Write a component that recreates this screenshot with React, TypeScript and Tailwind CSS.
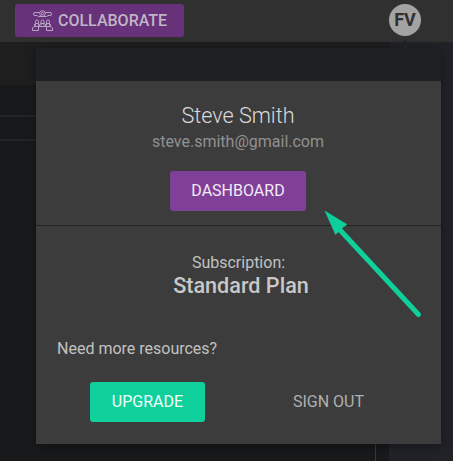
import React from 'react';

function TeamIcon() {
  return (
    <svg width="21" height="21" viewBox="0 0 21 21" fill="none" stroke="#b9a5c3" strokeWidth="1" className="shrink-0">
      <circle cx="10.500" cy="3.500" r="2.800" />
      <circle cx="10.500" cy="3.500" r="1.100" />
      <path d="M7.700 2.500H3Q1.500 2.500 1.500 4t1.500 1.500h2l1.500 1h8l1.500-1H18q1.500 0 1.500-1.500T18 2.500h-4.700" />
      <path d="M3.500 15.500v-4q0-1.500 1.500-1.500t1.500 1.500v4M9 15.500v-4q0-1.500 1.500-1.500t1.500 1.500v4M14.500 15.500v-4q0-1.500 1.500-1.500t1.500 1.500v4M3.500 13.500h3M9 13.500h3M14.500 13.500h3" />
      <path d="M2.500 16.500v-2l1-1M7.500 16.500v-2l1.500-1M13.500 16.500v-2l-1.500-1M18.500 16.500v-2l-1-1" />
      <path d="M.5 20.500V18L2 16.500h17L20.500 18v2.500M6.500 20.500v-4M14.500 20.500v-4M.5 20.500h6M14.500 20.500h6" />
    </svg>
  );
}

function Header() {
  return (
    <header className="flex h-[42px] items-start justify-between bg-[#303030] pl-[15px] pr-8 pt-1">
      <button className="flex h-[33px] w-[169px] items-center rounded-[3px] bg-[#673279] pl-[17px] text-base font-medium text-[#c0b5c6]">
        <TeamIcon />
        <span className="ml-[5px] whitespace-nowrap">COLLABORATE</span>
      </button>
      <div className="flex size-8 items-center justify-center rounded-full bg-[#a3a3a3] text-lg font-bold text-[#303030]">FV</div>
    </header>
  );
}

function Workspace() {
  return (
    <main className="flex h-[419px]">
      <div className="flex w-[389px] flex-col bg-[#18191b]">
        <div className="h-[43px] bg-[#1e1e1e]" />
        <div className="h-8 border-b-2 border-[#222325]" />
        <div className="h-6 border-b-2 border-[#222325]" />
        <div className="mr-[13px] flex-1 border-r border-[#39393b]" />
      </div>
      <div className="flex-1 bg-[#212227]" />
    </main>
  );
}

function AccountMenu() {
  return (
    <section className="absolute left-9 top-12 flex h-[396px] w-[405px] flex-col bg-[#3c3c3c] text-base font-normal text-[#c2c2c2] shadow-[0_2px_9px_rgba(0,0,0,0.35)]">
      <div className="h-[33px] bg-[#1e2022]" />
      <div className="flex h-[145px] flex-col items-center border-b border-[#222222] pr-px pt-5">
        <h1 className="text-[21.6px] font-light leading-[30px] text-[#dadada]">Steve Smith</h1>
        <p className="leading-[22px] text-[#919191]">steve.smith@gmail.com</p>
        <button className="mt-[18px] h-10 w-[136px] rounded-[3px] bg-[#804097] text-[#f2eaf5]">DASHBOARD</button>
      </div>
      <div className="flex flex-1 flex-col">
        <p className="mt-[26px] text-center leading-[22px]">Subscription:</p>
        <p className="pl-[5px] text-center text-[21.6px] font-medium leading-[24px] text-[#c8c8c8]">Standard Plan</p>
        <p className="ml-[21px] mt-10 leading-[22px]">Need more resources?</p>
        <div className="ml-[54px] mt-[22px] flex items-center">
          <button className="h-10 w-[115px] rounded-[3px] bg-[#0fd09b] text-[#f1fffa]">UPGRADE</button>
          <button className="ml-[66px] h-10 w-[115px] text-[#b0b0b0]">SIGN OUT</button>
        </div>
      </div>
    </section>
  );
}

export default function App() {
  return (
    <div className="relative h-[461px] w-[453px] overflow-hidden bg-[#18191b] font-['Roboto',sans-serif]">
      <Header />
      <Workspace />
      <AccountMenu />
      <svg className="absolute left-[398px] top-10" width="14" height="8" viewBox="0 0 14 8">
        <path d="M0 8 7 0l7 8Z" fill="#1e2022" />
      </svg>
      <svg className="absolute left-[320px] top-[205px]" width="106" height="116" viewBox="0 0 106 116">
        <path d="M20 25 98.500 109.500" stroke="#0fd09b" strokeWidth="5" strokeLinecap="round" />
        <path d="M5 6 27 19.500 22 23 19.500 26 15.500 29.500Z" fill="#0fd09b" stroke="#0fd09b" strokeWidth="0.500" />
      </svg>
    </div>
  );
}
